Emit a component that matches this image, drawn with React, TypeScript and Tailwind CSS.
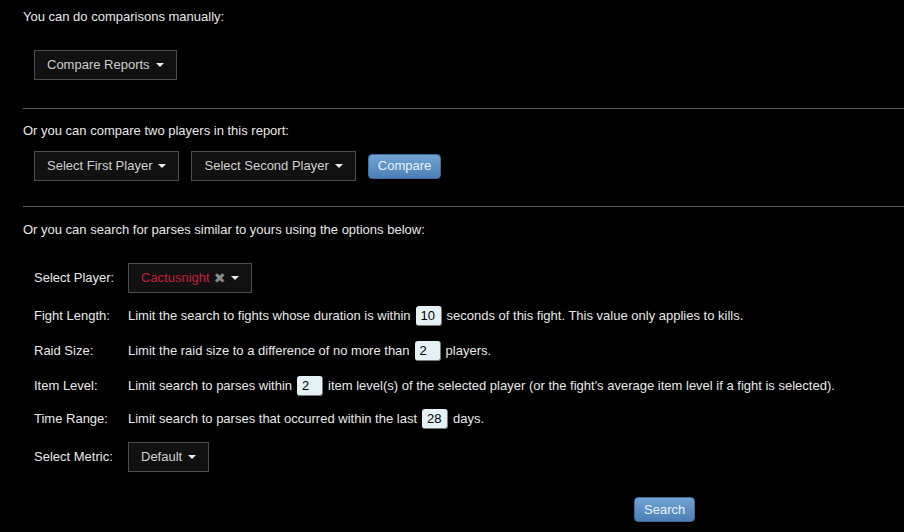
import React from "react";

// small white caret like bootstrap's .caret
const Caret = () => (
  <span className="inline-block w-0 h-0 border-x-[4px] border-x-transparent border-t-[4px] border-t-[#eee] ml-[6px] align-middle" />
);

const DropButton = ({ children }: { children: React.ReactNode }) => (
  <button
    type="button"
    className="h-[30px] px-3 flex items-center border border-[#4d4d4d] bg-[#111] text-[#cfcfcf] text-[13px]"
  >
    {children}
    <Caret />
  </button>
);

const BlueButton = ({ label }: { label: string }) => (
  <button
    type="button"
    className="h-[25px] px-[9px] rounded-[4px] text-[13px] text-[#eaf2ff] bg-gradient-to-b from-[#72a3d3] to-[#4c7fb5] border border-[#3f6c9c]"
  >
    {label}
  </button>
);

const NumBox = ({ value }: { value: string }) => (
  <span className="inline-flex items-center w-[26px] h-[20px] mx-[5px] pl-[5px] rounded-[3px] bg-[#e4f1f5] text-black border-r border-b border-[#777] align-middle">
    {value}
  </span>
);

const Row = ({
  label,
  className,
  children,
}: {
  label: string;
  className?: string;
  children: React.ReactNode;
}) => (
  <div className={"flex items-center " + (className ?? "")}>
    <div className="w-[94px] shrink-0">{label}</div>
    <div className="flex items-center">{children}</div>
  </div>
);

export default function App(): JSX.Element {
  return (
    <div
      className="bg-black min-h-[532px] w-full text-[13px] text-[#e8e8e8] pl-[23px] overflow-hidden"
      style={{ fontFamily: '"Liberation Sans", Arial, sans-serif' }}
    >
      <p className="pt-[7px] leading-[20px]">You can do comparisons manually:</p>
      <div className="ml-[11px] mt-[23px] flex">
        <DropButton>Compare Reports</DropButton>
      </div>
      <div className="mt-[28px] border-t border-[#5a5a5a]" />

      <p className="mt-[12px] leading-[20px]">Or you can compare two players in this report:</p>
      <div className="ml-[11px] mt-[10px] flex items-center gap-[12px]">
        <DropButton>Select First Player</DropButton>
        <DropButton>Select Second Player</DropButton>
        <BlueButton label="Compare" />
      </div>
      <div className="mt-[25px] border-t border-[#5a5a5a]" />

      <p className="mt-[13px] leading-[20px]">
        Or you can search for parses similar to yours using the options below:
      </p>

      <div className="ml-[11px] mt-[23px] flex flex-col">
        <Row label="Select Player:" className="h-[30px]">
          <button
            type="button"
            className="h-[30px] px-3 flex items-center border border-[#4d4d4d] bg-[#111] text-[13px]"
          >
            <span className="text-[#c41f3b]">Cactusnight</span>
            <span
              className="ml-[4px] text-[#8a8a8a] text-[14px]"
              style={{ fontFamily: '"DejaVu Sans", sans-serif' }}
            >
              ✖
            </span>
            <Caret />
          </button>
        </Row>
        <Row label="Fight Length:" className="h-[20px] mt-[13px]">
          Limit the search to fights whose duration is within
          <NumBox value="10" />
          seconds of this fight. This value only applies to kills.
        </Row>
        <Row label="Raid Size:" className="h-[20px] mt-[15px]">
          Limit the raid size to a difference of no more than
          <NumBox value="2" />
          players.
        </Row>
        <Row label="Item Level:" className="h-[20px] mt-[15px]">
          Limit search to parses within
          <NumBox value="2" />
          item level(s) of the selected player (or the fight's average item level if a fight is
          selected).
        </Row>
        <Row label="Time Range:" className="h-[20px] mt-[13px]">
          Limit search to parses that occurred within the last
          <NumBox value="28" />
          days.
        </Row>
        <Row label="Select Metric:" className="h-[30px] mt-[13px]">
          <DropButton>Default</DropButton>
        </Row>
      </div>

      <div className="mt-[25px] ml-[611px] flex">
        <BlueButton label="Search" />
      </div>
    </div>
  );
}
